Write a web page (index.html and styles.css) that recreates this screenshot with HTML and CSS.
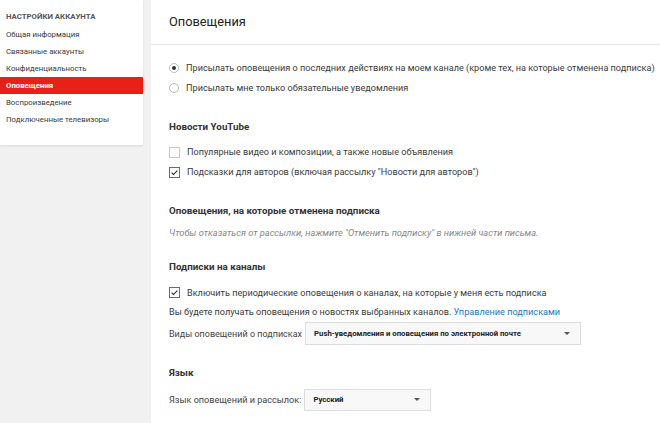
FILE: index.html
```html
<!DOCTYPE html>
<html lang="ru">
<head>
<meta charset="utf-8">
<link rel="stylesheet" href="styles.css">
</head>
<body>
<aside class="sidebar">
  <div class="side-title">НАСТРОЙКИ АККАУНТА</div>
  <ul class="side-list">
    <li>Общая информация</li>
    <li>Связанные аккаунты</li>
    <li>Конфиденциальность</li>
    <li class="active">Оповещения</li>
    <li>Воспроизведение</li>
    <li>Подключенные телевизоры</li>
  </ul>
</aside>
<main class="panel">
  <header class="panel-head">Оповещения</header>
  <div class="content">
    <div class="group radios">
      <div class="row"><span class="radio on"></span>Присылать оповещения о последних действиях на моем канале (кроме тех, на которые отменена подписка)</div>
      <div class="row"><span class="radio"></span>Присылать мне только обязательные уведомления</div>
    </div>

    <h2 class="sec sec-news">Новости YouTube</h2>
    <div class="group">
      <div class="row"><span class="cb"></span>Популярные видео и композиции, а также новые объявления</div>
      <div class="row"><span class="cb on"></span>Подсказки для авторов (включая рассылку "Новости для авторов")</div>
    </div>

    <h2 class="sec sec-unsub">Оповещения, на которые отменена подписка</h2>
    <p class="hint">Чтобы отказаться от рассылки, нажмите "Отменить подписку" в нижней части письма.</p>

    <h2 class="sec sec-subs">Подписки на каналы</h2>
    <div class="row short"><span class="cb on"></span>Включить периодические оповещения о каналах, на которые у меня есть подписка</div>
    <div class="row short">Вы будете получать оповещения о новостях выбранных каналов.&nbsp;<a class="link">Управление подписками</a></div>
    <div class="field">
      <span class="label">Виды оповещений о подписках</span>
      <div class="select wide"><span>Push-уведомления и оповещения по электронной почте</span><i class="caret"></i></div>
    </div>

    <h2 class="sec sec-lang">Язык</h2>
    <div class="field lang">
      <span class="label">Язык оповещений и рассылок:</span>
      <div class="select narrow"><span>Русский</span><i class="caret"></i></div>
    </div>
  </div>
</main>
</body>
</html>
```

FILE: styles.css
```css
* { box-sizing: border-box; }
html, body { margin: 0; padding: 0; }
body {
  background: #f1f1f1;
  font-family: Roboto, "Liberation Sans", Arial, sans-serif;
  color: #333;
  display: flex;
  align-items: flex-start;
  width: 660px;
  height: 423px;
  overflow: hidden;
}
.sidebar {
  width: 143px;
  height: 145px;
  background: #fff;
  box-shadow: 0 1px 2px rgba(0,0,0,0.1);
  padding-top: 11px;
  flex-shrink: 0;
}
.side-title {
  font-size: 7.8px;
  font-weight: 700;
  color: #555;
  padding-left: 6px;
  height: 12px;
  line-height: 12px;
  margin-bottom: 3px;
}
.side-list { list-style: none; margin: 0; padding: 0; }
.side-list li {
  font-size: 7.8px;
  color: #3a3a3a;
  height: 17px;
  line-height: 17px;
  padding-left: 6px;
}
.side-list li.active {
  background: #e62117;
  color: #fff;
  font-weight: 700;
}
.panel {
  flex: 1;
  margin-left: 8px;
  height: 423px;
  background: #fff;
}
.panel-head {
  height: 45px;
  line-height: 44px;
  border-bottom: 1px solid #e6e6e6;
  padding-left: 18px;
  font-size: 12.8px;
  color: #222;
}
.content { padding-left: 18px; }
.group.radios { padding-top: 13px; }
.row {
  display: flex;
  align-items: center;
  height: 20px;
  font-size: 9.15px;
  color: #3a3a3a;
  white-space: nowrap;
}
.row.short { height: 19px; }
.radio {
  width: 10px; height: 10px;
  border: 1px solid #bbb;
  border-radius: 50%;
  margin-right: 7px;
  position: relative;
  flex-shrink: 0;
}
.radio.on::after {
  content: "";
  position: absolute;
  left: 2px; top: 2px;
  width: 4px; height: 4px;
  border-radius: 50%;
  background: #333;
}
.cb {
  width: 11px; height: 11px;
  border: 1px solid #c6c6c6;
  margin-right: 7px;
  position: relative;
  flex-shrink: 0;
  background: #fff;
}
.cb.on { border-color: #5a6e8c; }
.cb.on::after {
  content: "";
  position: absolute;
  left: 3px; top: 1px;
  width: 2px; height: 5px;
  border: solid #222;
  border-width: 0 1.5px 1.5px 0;
  transform: rotate(45deg);
}
.sec {
  font-size: 9.8px;
  font-weight: 700;
  color: #333;
  margin: 0;
  height: 20px;
  line-height: 20px;
}
.sec-news { margin-top: 19px; margin-bottom: 5px; }
.sec-unsub { margin-top: 19px; }
.hint {
  margin: 2px 0 0;
  height: 20px;
  line-height: 20px;
  font-size: 9.25px;
  font-style: italic;
  color: #888;
}
.sec-subs { margin-top: 14px; margin-bottom: 6px; }
.link { color: #167ac6; text-decoration: none; }
.field {
  display: flex;
  align-items: center;
  font-size: 9px;
  color: #444;
  height: 25px;
}
.field.lang { font-size: 9.1px; }
.label { margin-right: 3px; white-space: nowrap; }
.select {
  height: 23px;
  border: 1px solid #dcdcdc;
  background: #f8f8f8;
  display: flex;
  align-items: center;
  justify-content: space-between;
  padding: 0 10px 0 8px;
  font-size: 7.75px;
  font-weight: 700;
  color: #222;
}
.select.wide { width: 276px; }
.select.narrow { width: 127px; height: 22px; }
.caret {
  width: 0; height: 0;
  border-left: 3px solid transparent;
  border-right: 3px solid transparent;
  border-top: 3px solid #555;
}
.sec-lang { margin-top: 17px; margin-bottom: 4px; }
```
